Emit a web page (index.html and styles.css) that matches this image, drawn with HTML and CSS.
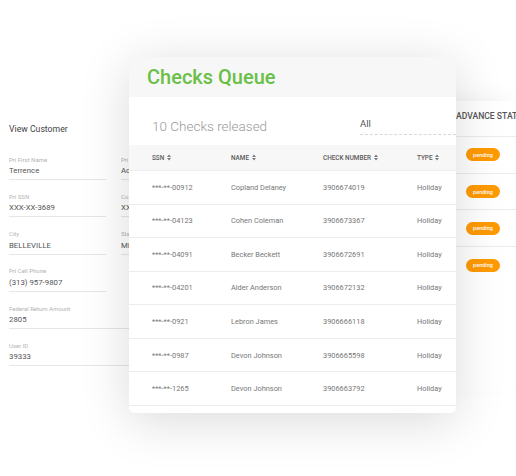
FILE: index.html
```html
<!DOCTYPE html>
<html lang="en">
<head>
<meta charset="utf-8">
<title>Checks Queue</title>
<link rel="stylesheet" href="styles.css">
</head>
<body>
<div class="stage">
  <section class="customer">
    <h2 class="customer-title">View Customer</h2>
    <div class="fields">
      <div class="field"><div class="label">Pri First Name</div><div class="value">Terrence</div></div>
      <div class="field"><div class="label">Pri Last Name</div><div class="value">Adams</div></div>
      <div class="field"><div class="label">Pri SSN</div><div class="value">XXX-XX-3689</div></div>
      <div class="field"><div class="label">Co SSN</div><div class="value">XXX-XX-1204</div></div>
      <div class="field"><div class="label">City</div><div class="value">BELLEVILLE</div></div>
      <div class="field"><div class="label">State</div><div class="value">MI</div></div>
      <div class="field"><div class="label">Pri Cell Phone</div><div class="value">(313) 957-9807</div></div>
      <div class="field empty"></div>
      <div class="field wide"><div class="label">Federal Return Amount</div><div class="value">2805</div></div>
      <div class="field wide"><div class="label">User ID</div><div class="value">39333</div></div>
    </div>
  </section>

  <section class="status-card">
    <div class="status-head"><span class="status-title">ADVANCE STATUS</span></div>
    <div class="status-row"><span class="badge">pending</span></div>
    <div class="status-row"><span class="badge">pending</span></div>
    <div class="status-row"><span class="badge">pending</span></div>
    <div class="status-row last"><span class="badge">pending</span></div>
  </section>

  <section class="queue">
    <header class="queue-head"><h1 class="queue-title">Checks Queue</h1></header>
    <div class="toolbar">
      <div class="count">10 Checks released</div>
      <div class="select">All</div>
    </div>
    <div class="thead">
      <div class="th"><span>SSN</span><svg class="sort" viewBox="0 0 4 7" width="4" height="7"><path d="M0 3 L2 0.4 L4 3Z M0 4 L2 6.6 L4 4Z"/></svg></div>
      <div class="th"><span>NAME</span><svg class="sort" viewBox="0 0 4 7" width="4" height="7"><path d="M0 3 L2 0.4 L4 3Z M0 4 L2 6.6 L4 4Z"/></svg></div>
      <div class="th"><span>CHECK NUMBER</span><svg class="sort" viewBox="0 0 4 7" width="4" height="7"><path d="M0 3 L2 0.4 L4 3Z M0 4 L2 6.6 L4 4Z"/></svg></div>
      <div class="th"><span>TYPE</span><svg class="sort" viewBox="0 0 4 7" width="4" height="7"><path d="M0 3 L2 0.4 L4 3Z M0 4 L2 6.6 L4 4Z"/></svg></div>
    </div>
    <div class="tr"><div>***-**-00912</div><div>Copland Delaney</div><div>3906674019</div><div>Holiday</div></div>
    <div class="tr"><div>***-**-04123</div><div>Cohen Coleman</div><div>3906673367</div><div>Holiday</div></div>
    <div class="tr"><div>***-**-04091</div><div>Becker Beckett</div><div>3906672691</div><div>Holiday</div></div>
    <div class="tr"><div>***-**-04201</div><div>Alder Anderson</div><div>3906672132</div><div>Holiday</div></div>
    <div class="tr"><div>***-**-0921</div><div>Lebron James</div><div>3906666118</div><div>Holiday</div></div>
    <div class="tr"><div>***-**-0987</div><div>Devon Johnson</div><div>3906665598</div><div>Holiday</div></div>
    <div class="tr"><div>***-**-1265</div><div>Devon Johnson</div><div>3906663792</div><div>Holiday</div></div>
  </section>
</div>
</body>
</html>
```

FILE: styles.css
```css
* { box-sizing: border-box; }
html, body {
  margin: 0;
  padding: 0;
  background: #ffffff;
  font-family: Roboto, "Noto Sans", Arial, sans-serif;
}
.stage {
  position: relative;
  width: 516px;
  height: 476px;
  overflow: hidden;
  background: #ffffff;
}

/* ---------- background customer card ---------- */
.customer {
  position: absolute;
  left: 0;
  top: 110px;
  width: 240px;
  padding: 12.6px 0 0 9px;
  background: #ffffff;
}
.customer-title {
  margin: 0 0 21.3px;
  font-size: 8.7px;
  line-height: 12px;
  font-weight: 400;
  color: #444;
}
.fields {
  display: grid;
  grid-template-columns: 97px 97px;
  column-gap: 15px;
}
.field {
  padding-bottom: 2px;
  border-bottom: 1px solid #e6e6e6;
  margin-bottom: 12.8px;
}
.field.empty { border-bottom-color: transparent; }
.field.wide { grid-column: 1 / span 2; }
.label {
  height: 8px;
  font-size: 6px;
  line-height: 8px;
  color: #b3b3b3;
  white-space: nowrap;
}
.value {
  margin-top: 1.4px;
  height: 12px;
  font-size: 7.8px;
  line-height: 12px;
  color: #555;
  white-space: nowrap;
}

/* ---------- status card on the right ---------- */
.status-card {
  position: absolute;
  left: 400px;
  top: 101px;
  width: 116px;
  height: 290px;
  background: #ffffff;
  border-radius: 6px;
  box-shadow: 0 -6px 24px -8px rgba(0, 0, 0, 0.08);
  overflow: hidden;
}
.status-head {
  height: 36px;
  padding: 9px 0 0 56px;
  border-bottom: 1px solid #ececec;
  overflow: hidden;
}
.status-title {
  display: block;
  width: 60px;
  overflow: hidden;
  font-size: 8.6px;
  line-height: 13px;
  font-weight: 500;
  color: #555;
  white-space: nowrap;
}
.status-row {
  height: 36.7px;
  display: flex;
  align-items: center;
  padding-left: 66px;
  border-bottom: 1px solid #ececec;
}
.status-row.last { border-bottom: none; }
.badge {
  display: inline-flex;
  align-items: center;
  justify-content: center;
  width: 34px;
  height: 13px;
  border-radius: 7px;
  background: #ff9a00;
  color: #ffffff;
  font-size: 5.5px;
  font-weight: 500;
}

/* ---------- main queue card ---------- */
.queue {
  position: absolute;
  left: 129px;
  top: 57px;
  width: 327px;
  height: 356px;
  background: #ffffff;
  border-radius: 6px;
  overflow: hidden;
  box-shadow: 0 8px 50px rgba(0, 0, 0, 0.15);
}
.queue-head {
  height: 40px;
  background: #f7f7f7;
  padding-left: 18px;
  display: flex;
  align-items: center;
}
.queue-title {
  margin: 0;
  font-size: 20px;
  line-height: 24px;
  font-weight: 500;
  color: #6abf47;
}
.toolbar {
  height: 48px;
  display: grid;
  grid-template-columns: 208px 1fr;
  align-items: start;
  padding: 21px 0 0 23px;
}
.count {
  font-size: 13.5px;
  line-height: 16px;
  font-weight: 300;
  color: #9a9a9a;
  white-space: nowrap;
}
.select {
  font-size: 9.5px;
  line-height: 12px;
  color: #555;
  padding-bottom: 4px;
  border-bottom: 1px dashed #d8d8d8;
}
.thead, .tr {
  display: grid;
  grid-template-columns: 79px 92px 94px 1fr;
  align-items: center;
  padding-left: 23px;
}
.thead {
  height: 26px;
  background: #f7f7f7;
  border-bottom: 1px solid #efefef;
}
.th {
  display: flex;
  align-items: center;
  gap: 2.5px;
  font-size: 6.4px;
  line-height: 8px;
  font-weight: 500;
  color: #5a5a5a;
  white-space: nowrap;
}
.sort {
  flex: none;
  fill: #7a7a7a;
}
.tr {
  height: 33.57px;
  border-bottom: 1px solid #ececec;
  font-size: 7.4px;
  color: #777;
  white-space: nowrap;
}
```
